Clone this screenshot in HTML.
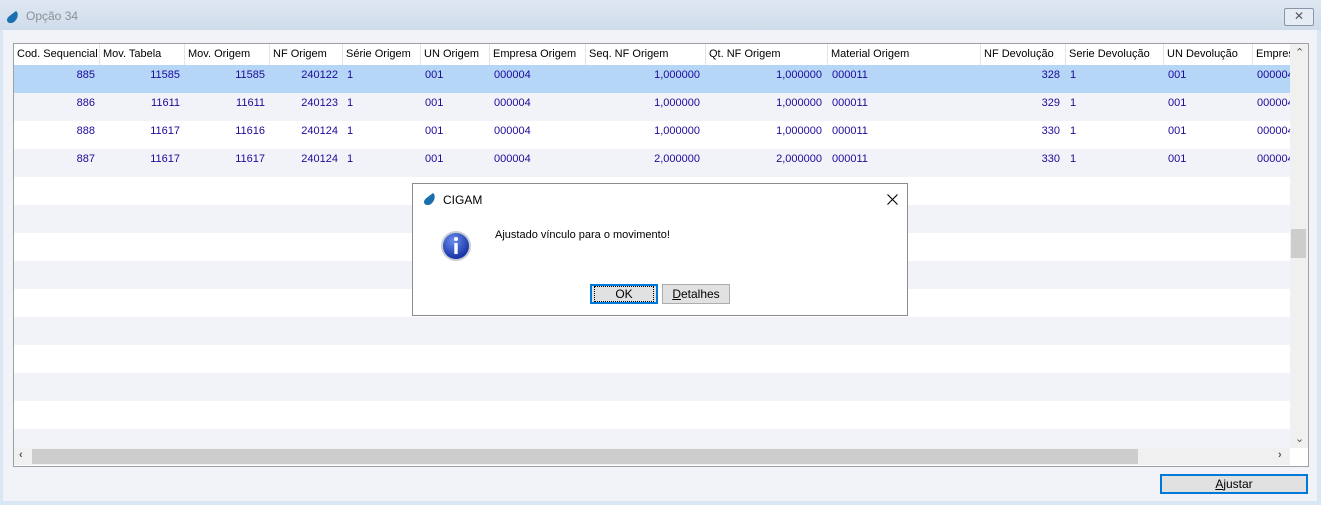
<!DOCTYPE html>
<html><head><meta charset="utf-8"><style>
*{margin:0;padding:0;box-sizing:border-box}
body{width:1321px;height:505px;overflow:hidden;background:#d9e6f3;font-family:"Liberation Sans",sans-serif;font-size:11px;position:relative}
.abs{position:absolute}
#title{left:0;top:0;width:1321px;height:30px;background:linear-gradient(#dfe8f2,#cfdceb)}
#body{left:3px;top:30px;width:1314px;height:471px;background:#f1f3f8}
#grid{left:13px;top:43px;width:1296px;height:424px;border:1px solid #a0a0a0;background:#fff;overflow:hidden}
.hd{position:absolute;top:0;height:21px;line-height:21px;background:#fff;border-right:1px solid #e4e4e4;padding-left:3px;color:#000;white-space:nowrap;overflow:hidden}
.row{position:absolute;left:0;width:1276px;height:28px}
.row span{position:absolute;top:4px;color:#1c0a9a;white-space:nowrap}
.g{background:#f2f3f8}
.sel{background:#b5d6f7}
.btn{position:absolute;background:#e1e1e1;border:1px solid #adadad;text-align:center;font-size:12px;color:#000}
</style></head><body>
<div id="title" class="abs">
 <svg class="abs" style="left:6px;top:10px" width="14" height="14" viewBox="0 0 14 14"><path d="M10 1C13 3 12 9 8 12C5 14 1 13 1 10C1 7 5 5 10 1Z" fill="#1a6fb0"/></svg>
 <div class="abs" style="left:26px;top:9px;font-size:12px;color:#8a8f96">Opção 34</div>
 <div class="abs" style="left:1284px;top:8px;width:30px;height:18px;border:1px solid #8a96a6;border-radius:2px;background:#e6ecf3;text-align:center;line-height:15px;color:#556;font-size:12px">✕</div>
</div>
<div id="body" class="abs"></div>
<div id="grid" class="abs">
 <div class="row sel" style="top:21px"><span style="right:1195px">885</span><span style="right:1110px">11585</span><span style="right:1025px">11585</span><span style="right:952px">240122</span><span style="left:333px">1</span><span style="left:411px">001</span><span style="left:480px">000004</span><span style="right:590px">1,000000</span><span style="right:468px">1,000000</span><span style="left:818px">000011</span><span style="right:230px">328</span><span style="left:1056px">1</span><span style="left:1154px">001</span><span style="left:1243px">000004</span></div>
 <div class="row g" style="top:49px"><span style="right:1195px">886</span><span style="right:1110px">11611</span><span style="right:1025px">11611</span><span style="right:952px">240123</span><span style="left:333px">1</span><span style="left:411px">001</span><span style="left:480px">000004</span><span style="right:590px">1,000000</span><span style="right:468px">1,000000</span><span style="left:818px">000011</span><span style="right:230px">329</span><span style="left:1056px">1</span><span style="left:1154px">001</span><span style="left:1243px">000004</span></div>
 <div class="row" style="top:77px"><span style="right:1195px">888</span><span style="right:1110px">11617</span><span style="right:1025px">11616</span><span style="right:952px">240124</span><span style="left:333px">1</span><span style="left:411px">001</span><span style="left:480px">000004</span><span style="right:590px">1,000000</span><span style="right:468px">1,000000</span><span style="left:818px">000011</span><span style="right:230px">330</span><span style="left:1056px">1</span><span style="left:1154px">001</span><span style="left:1243px">000004</span></div>
 <div class="row g" style="top:105px"><span style="right:1195px">887</span><span style="right:1110px">11617</span><span style="right:1025px">11617</span><span style="right:952px">240124</span><span style="left:333px">1</span><span style="left:411px">001</span><span style="left:480px">000004</span><span style="right:590px">2,000000</span><span style="right:468px">2,000000</span><span style="left:818px">000011</span><span style="right:230px">330</span><span style="left:1056px">1</span><span style="left:1154px">001</span><span style="left:1243px">000004</span></div>
 <div class="row g" style="top:161px"></div>
 <div class="row g" style="top:217px"></div>
 <div class="row g" style="top:273px"></div>
 <div class="row g" style="top:329px"></div>
 <div class="row g" style="top:385px"></div>
 <div class="hd" style="left:0;width:86px">Cod. Sequencial</div>
 <div class="hd" style="left:86px;width:85px">Mov. Tabela</div>
 <div class="hd" style="left:171px;width:85px">Mov. Origem</div>
 <div class="hd" style="left:256px;width:73px">NF Origem</div>
 <div class="hd" style="left:329px;width:78px">Série Origem</div>
 <div class="hd" style="left:407px;width:69px">UN Origem</div>
 <div class="hd" style="left:476px;width:96px">Empresa Origem</div>
 <div class="hd" style="left:572px;width:120px">Seq. NF Origem</div>
 <div class="hd" style="left:692px;width:122px">Qt. NF Origem</div>
 <div class="hd" style="left:814px;width:153px">Material Origem</div>
 <div class="hd" style="left:967px;width:85px">NF Devolução</div>
 <div class="hd" style="left:1052px;width:98px">Serie Devolução</div>
 <div class="hd" style="left:1150px;width:89px">UN Devolução</div>
 <div class="hd" style="left:1239px;width:40px">Empresa</div>
 <div class="abs" style="left:1276px;top:0;width:18px;height:404px;background:#f0f0f0"></div>
 <div class="abs" style="left:1281px;top:2px;font-size:11px;color:#555">&#8963;</div>
 <div class="abs" style="left:1281px;top:388px;font-size:11px;color:#555">&#8964;</div>
 <div class="abs" style="left:1277px;top:185px;width:15px;height:29px;background:#cdcdcd"></div>
 <div class="abs" style="left:0;top:404px;width:1276px;height:17px;background:#f0f0f0"></div>
 <div class="abs" style="left:18px;top:405px;width:1106px;height:15px;background:#cdcdcd"></div>
 <div class="abs" style="left:5px;top:405px;color:#555;font-weight:bold">‹</div>
 <div class="abs" style="left:1264px;top:405px;color:#555;font-weight:bold">›</div>
</div>
<div class="btn" style="left:1160px;top:474px;width:148px;height:20px;border:2px solid #0078d7;line-height:16px"><u>A</u>justar</div>

<div class="abs" style="left:412px;top:183px;width:496px;height:133px;background:#fff;border:1px solid #8c8c8c">
 <svg class="abs" style="left:10px;top:8px" width="14" height="14" viewBox="0 0 14 14"><path d="M10 1C13 3 12 9 8 12C5 14 1 13 1 10C1 7 5 5 10 1Z" fill="#1a6fb0"/></svg>
 <div class="abs" style="left:30px;top:9px;font-size:12px">CIGAM</div>
 <svg class="abs" style="left:474px;top:10px" width="11" height="11" viewBox="0 0 11 11"><path d="M0.5 0.5L10.5 10.5M10.5 0.5L0.5 10.5" stroke="#000" stroke-width="1.1"/></svg>
 <svg class="abs" style="left:27px;top:46px" width="32" height="32" viewBox="0 0 32 32"><defs><radialGradient id="g" cx="40%" cy="30%" r="70%"><stop offset="0" stop-color="#6a8df0"/><stop offset="1" stop-color="#1530a0"/></radialGradient></defs><circle cx="16" cy="16" r="15" fill="#c8ccd4"/><circle cx="16" cy="16" r="13" fill="url(#g)"/><circle cx="16" cy="9" r="2" fill="#fff"/><rect x="14.3" y="13" width="3.4" height="11" fill="#fff"/></svg>
 <div class="abs" style="left:82px;top:45px;font-size:11px">Ajustado vínculo para o movimento!</div>
 <div class="btn" style="left:177px;top:100px;width:68px;height:20px;border:2px solid #0078d7;line-height:16px"><span style="outline:1px dotted #000;padding:0 20px">OK</span></div>
 <div class="btn" style="left:249px;top:100px;width:68px;height:20px;line-height:18px"><u>D</u>etalhes</div>
</div>
</body></html>
